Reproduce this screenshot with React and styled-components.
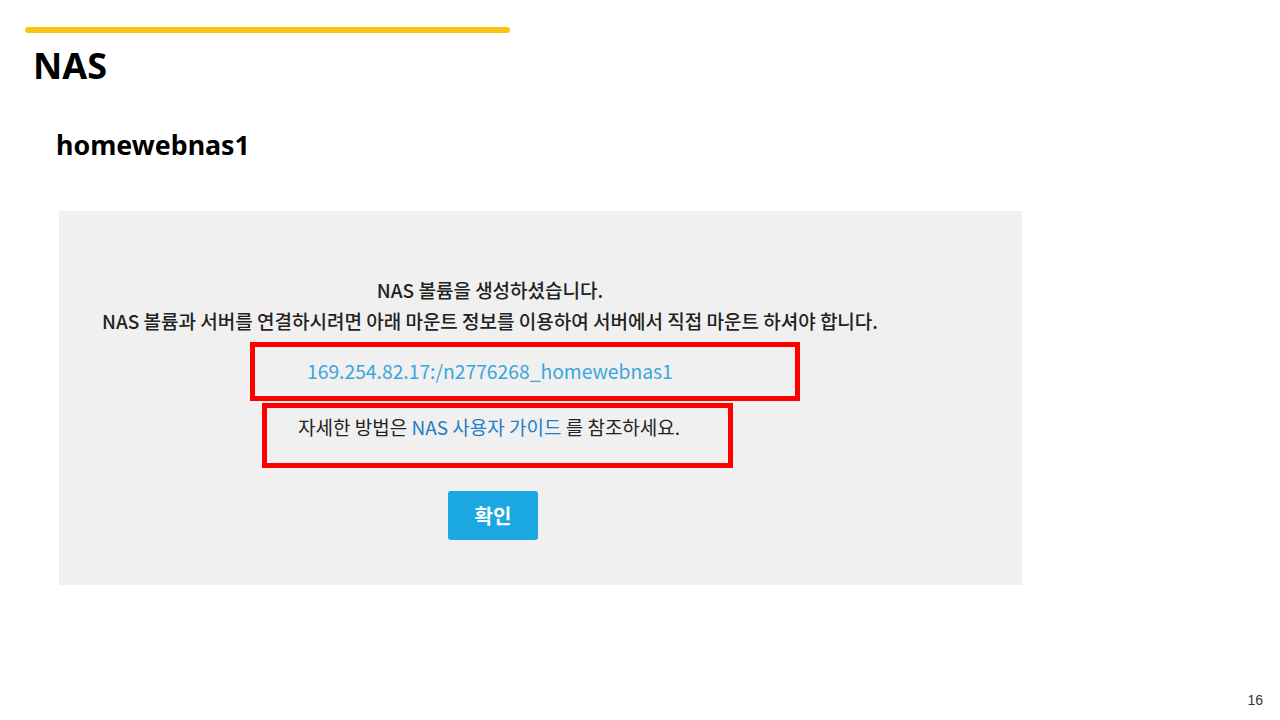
import React from 'react';
import styled, { createGlobalStyle } from 'styled-components';

const GlobalStyle = createGlobalStyle`
  html, body {
    margin: 0;
    padding: 0;
    background: #fff;
  }
  body {
    font-family: "Noto Sans", "Noto Sans CJK KR", sans-serif;
  }
`;

const Slide = styled.div`
  position: relative;
  width: 1280px;
  height: 720px;
  overflow: hidden;
  background: #fff;
  display: flex;
  flex-direction: column;
`;

const AccentBar = styled.div`
  margin: 27px 0 0 25px;
  width: 485px;
  height: 6px;
  border-radius: 3px;
  background: #fbc30d;
`;

const Title = styled.h1`
  margin: 9px 0 0 33px;
  font-size: 36px;
  line-height: 48px;
  font-weight: 700;
  color: #000;
`;

const Subtitle = styled.h2`
  margin: 37px 0 0 56px;
  font-size: 26.8px;
  line-height: 36px;
  font-weight: 700;
  color: #000;
`;

const Panel = styled.div`
  margin: 48px 0 0 59px;
  width: 963px;
  height: 374px;
  box-sizing: border-box;
  background: #f0f0f0;
  display: flex;
  flex-direction: column;
  align-items: flex-start;
  padding: 63px 101px 0 0;
  font-family: "Noto Sans CJK KR", "Noto Sans", sans-serif;
`;

const Message = styled.p`
  align-self: stretch;
  margin: 0;
  text-align: center;
  font-size: 19px;
  line-height: 31px;
  font-weight: 500;
  color: #222;
`;

const Highlight = styled.div`
  box-sizing: border-box;
  margin: ${p => p.$top}px 0 0 ${p => p.$left}px;
  width: ${p => p.$width}px;
  height: ${p => p.$height}px;
  border: 5px solid #f00;
  padding: ${p => p.$padTop}px 0 0 ${p => p.$padLeft}px;
`;

const MountPath = styled.span`
  display: block;
  font-size: 19.3px;
  line-height: 26px;
  color: #3ba6dc;
`;

const Guide = styled.span`
  display: block;
  font-size: 19px;
  line-height: 24px;
  color: #222;
`;

const GuideLink = styled.span`
  color: #2b7cc4;
`;

const ConfirmButton = styled.button`
  margin: 23px 0 0 389px;
  width: 90px;
  height: 49px;
  border: none;
  border-radius: 3px;
  background: #1aa7e2;
  color: #fff;
  font-family: "Noto Sans CJK KR", sans-serif;
  font-size: 20px;
  font-weight: 700;
  cursor: pointer;
`;

const PageNumber = styled.span`
  position: absolute;
  right: 17px;
  bottom: 12px;
  font-family: "Liberation Sans", Arial, sans-serif;
  font-size: 14px;
  color: #333;
`;

export default function App() {
  return (
    <>
      <GlobalStyle />
      <Slide>
        <AccentBar />
        <Title>NAS</Title>
        <Subtitle>homewebnas1</Subtitle>
        <Panel>
          <Message>NAS 볼륨을 생성하셨습니다.</Message>
          <Message>NAS 볼륨과 서버를 연결하시려면 아래 마운트 정보를 이용하여 서버에서 직접 마운트 하셔야 합니다.</Message>
          <Highlight $top={6} $left={191} $width={550} $height={59} $padTop={11} $padLeft={52}>
            <MountPath>169.254.82.17:/n2776268_homewebnas1</MountPath>
          </Highlight>
          <Highlight $top={2} $left={203} $width={471} $height={65} $padTop={7} $padLeft={31}>
            <Guide>
              자세한 방법은 <GuideLink>NAS 사용자 가이드</GuideLink> 를 참조하세요.
            </Guide>
          </Highlight>
          <ConfirmButton>확인</ConfirmButton>
        </Panel>
        <PageNumber>16</PageNumber>
      </Slide>
    </>
  );
}
